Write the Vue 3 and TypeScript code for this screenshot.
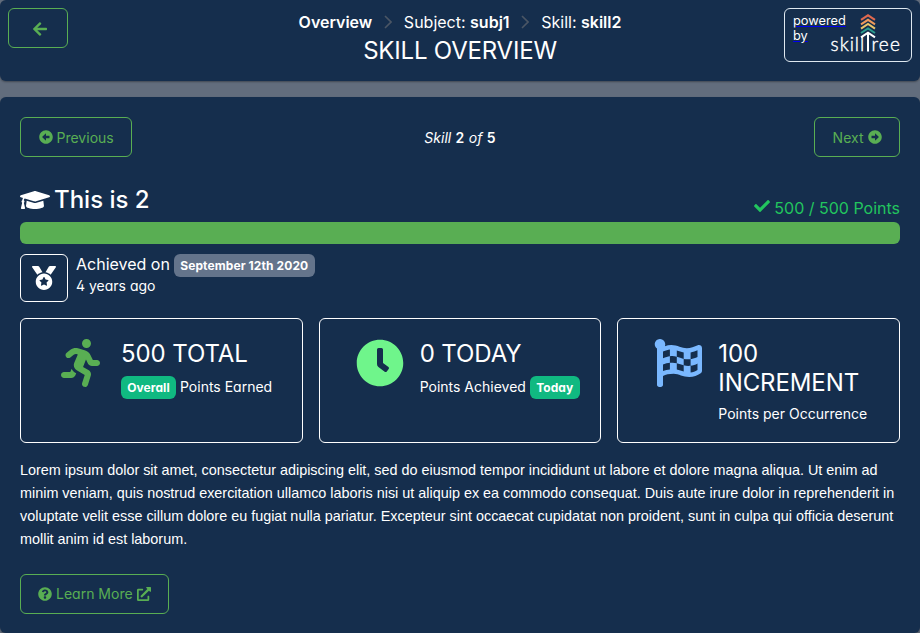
<script setup lang="ts">
import { h, type FunctionalComponent } from 'vue'

interface Glyph { w: number; d: string }

const glyphs: Record<string, Glyph> = {
  arrowLeft: { w: 448, d: 'M257.5 445.1l-22.2 22.2c-9.4 9.4-24.6 9.4-33.9 0L7 273c-9.4-9.4-9.4-24.6 0-33.9L201.4 44.7c9.4-9.4 24.6-9.4 33.9 0l22.2 22.2c9.5 9.5 9.3 25-.4 34.3L136.6 216H424c13.3 0 24 10.7 24 24v32c0 13.3-10.7 24-24 24H136.6l120.5 114.8c9.8 9.3 10 24.8.4 34.3z' },
  circleLeft: { w: 512, d: 'M256 504C119 504 8 393 8 256S119 8 256 8s248 111 248 248-111 248-248 248zm116-292H256v-70.9c0-10.7-13-16.1-20.5-8.5L121.2 247.5c-4.7 4.7-4.7 12.2 0 16.9l114.3 114.9c7.6 7.6 20.5 2.2 20.5-8.5V300h116c6.6 0 12-5.4 12-12v-64c0-6.6-5.4-12-12-12z' },
  circleRight: { w: 512, d: 'M256 8c137 0 248 111 248 248S393 504 256 504 8 393 8 256 119 8 256 8zM140 300h116v70.9c0 10.7 13 16.1 20.5 8.5l114.3-114.9c4.7-4.7 4.7-12.2 0-16.9l-114.3-115c-7.6-7.6-20.5-2.2-20.5 8.5V212H140c-6.6 0-12 5.4-12 12v64c0 6.6 5.4 12 12 12z' },
  cap: { w: 640, d: 'M622.34 153.2L343.4 67.5c-15.2-4.67-31.6-4.67-46.79 0L17.66 153.2c-23.54 7.23-23.54 38.36 0 45.59l48.63 14.94c-10.67 13.19-17.23 29.28-17.88 46.9C38.78 266.15 32 276.11 32 288c0 10.78 5.68 19.85 13.86 25.65L20.33 428.53C18.11 438.52 25.71 448 35.94 448h56.11c10.24 0 17.84-9.48 15.62-19.47L82.14 313.65C90.32 307.85 96 298.78 96 288c0-11.57-6.47-21.25-15.66-26.87.76-15.02 8.44-28.3 20.69-36.72L296.6 284.5c9.06 2.78 26.44 6.25 46.79 0l278.95-85.7c23.55-7.24 23.55-38.36 0-45.6zM352.79 315.09c-28.53 8.76-52.84 3.92-65.59 0l-145.02-44.55L128 384c0 35.35 85.96 64 192 64s192-28.65 192-64l-14.18-113.47-145.03 44.56z' },
  check: { w: 512, d: 'M173.898 439.404l-166.4-166.4c-9.997-9.997-9.997-26.206 0-36.204l36.203-36.204c9.997-9.998 26.207-9.998 36.204 0L192 312.69 432.095 72.596c9.997-9.997 26.207-9.997 36.204 0l36.203 36.204c9.997 9.997 9.997 26.206 0 36.204l-294.4 294.401c-9.998 9.997-26.207 9.997-36.204-.001z' },
  medal: { w: 512, d: 'M223.75 130.75L154.62 15.54A31.997 31.997 0 0 0 127.18 0H16.03C3.08 0-4.5 14.57 2.92 25.18l111.27 158.96c29.72-27.77 67.52-46.83 109.56-53.39zM495.97 0H384.82c-11.24 0-21.66 5.9-27.44 15.54l-69.13 115.21c42.04 6.56 79.84 25.62 109.56 53.38L509.08 25.18C516.5 14.57 508.92 0 495.97 0zM256 160c-97.2 0-176 78.8-176 176s78.8 176 176 176 176-78.8 176-176-78.8-176-176-176zm92.52 157.26l-37.93 36.96 8.97 52.22c1.6 9.36-8.26 16.51-16.65 12.09L256 393.88l-46.9 24.65c-8.4 4.45-18.25-2.74-16.65-12.09l8.97-52.22-37.93-36.96c-6.82-6.64-3.05-18.23 6.35-19.59l52.43-7.64 23.43-47.52c2.11-4.28 6.19-6.39 10.28-6.39 4.11 0 8.22 2.14 10.33 6.39l23.43 47.52 52.43 7.64c9.4 1.36 13.17 12.95 6.35 19.59z' },
  running: { w: 416, d: 'M272 96c26.51 0 48-21.49 48-48S298.51 0 272 0s-48 21.49-48 48 21.49 48 48 48zM113.69 317.47l-14.8 34.52H32c-17.67 0-32 14.33-32 32s14.33 32 32 32h77.45c19.25 0 36.58-11.44 44.11-29.09l8.79-20.52-10.67-6.3c-17.32-10.23-30.06-25.37-37.99-42.61zM384 223.99h-44.03l-26.06-53.25c-12.5-25.55-35.45-44.23-61.78-50.94l-71.08-21.14c-28.3-6.8-57.77-.55-80.84 17.14l-39.67 30.41c-14.03 10.75-16.69 30.83-5.94 44.86s30.84 16.69 44.86 5.94l39.66-30.41c7.67-5.89 17.44-8 25.27-6.14l14.7 4.37-37.46 87.39c-12.62 29.48-1.31 64.01 26.3 80.31l84.98 50.17-27.47 87.73c-5.28 16.86 4.11 34.82 20.97 40.1 3.19 1 6.41 1.48 9.58 1.48 13.61 0 26.23-8.77 30.52-22.45l31.64-101.06c5.91-20.77-2.89-43.08-21.64-54.39l-61.24-36.14 31.31-78.28 20.27 41.43c8 16.34 24.92 26.89 43.11 26.89H384c17.67 0 32-14.33 32-32s-14.33-31.99-32-31.99z' },
  clock: { w: 512, d: 'M256,8C119,8,8,119,8,256S119,504,256,504,504,393,504,256,393,8,256,8Zm92.49,313h0l-20,25a16,16,0,0,1-22.49,2.5h0l-67-49.72a40,40,0,0,1-15-31.23V112a16,16,0,0,1,16-16h32a16,16,0,0,1,16,16V256l58,42.5A16,16,0,0,1,348.49,321Z' },
  flag: { w: 512, d: 'M243.2 189.9V258c26.1 5.9 49.3 15.6 73.6 22.3v-68.2c-26-5.8-49.4-15.5-73.6-22.2zm223.3-123c-34.3 15.9-76.5 31.9-117 31.9C296 98.8 251.7 64 184.3 64c-25 0-47.3 4.4-68 12 2.8-7.3 4.1-15.2 3.6-23.6C118.1 24 94.8 1.2 66.3 0 34.3-1.3 8 24.3 8 56c0 19 9.5 35.8 24 45.9V488c0 13.3 10.7 24 24 24h16c13.3 0 24-10.7 24-24v-94.4c28.3-12.1 63.6-22.1 114.4-22.1 53.6 0 97.8 34.8 165.2 34.8 48.2 0 86.7-16.3 122.5-40.9 8.7-6 13.8-15.8 13.8-26.4V95.9c.1-23.3-24.2-38.8-45.4-29zM169.6 325.5c-25.8 2.7-50 8.2-73.6 16.6v-70.5c26.2-9.3 47.5-15 73.6-17.4v71.3zM464 191c-23.6 9.8-46.3 19.5-73.6 23.9V286c24.8-3.4 51.4-11.8 73.6-26v70.5c-25.1 16.1-48.5 24.7-73.6 27.1V286c-27 3.7-47.9 1.5-73.6-5.6v67.4c-23.9-7.4-47.3-16.7-73.6-21.3V258c-19.7-4.4-40.8-6.8-73.6-3.8v-70c-22.4 3.1-44.6 10.2-73.6 20.9v-70.5c33.2-12.2 50.1-19.8 73.6-22v71.6c27-3.7 48.4-1.3 73.6 5.7v-67.4c23.7 7.4 47.2 16.7 73.6 21.3v68.4c23.7 5.3 47.6 6.9 73.6 2.7V143c27-4.8 52.3-13.6 73.6-22.5z' },
  question: { w: 512, d: 'M504 256c0 136.997-111.043 248-248 248S8 392.997 8 256C8 119.083 119.043 8 256 8s248 111.083 248 248zM262.655 90c-54.497 0-89.255 22.957-116.549 63.758-3.536 5.286-2.353 12.415 2.715 16.258l34.699 26.31c5.205 3.947 12.621 3.008 16.665-2.122 17.864-22.658 30.113-35.797 57.303-35.797 20.429 0 45.698 13.148 45.698 32.958 0 14.976-12.363 22.667-32.534 33.976C247.128 238.528 216 254.941 216 296v4c0 6.627 5.373 12 12 12h56c6.627 0 12-5.373 12-12v-1.333c0-28.462 83.186-29.647 83.186-106.667 0-58.002-60.165-102-116.531-102zM256 338c-25.365 0-46 20.635-46 46 0 25.364 20.635 46 46 46s46-20.636 46-46c0-25.365-20.635-46-46-46z' },
  external: { w: 512, d: 'M432,320H400a16,16,0,0,0-16,16V448H64V128H208a16,16,0,0,0,16-16V80a16,16,0,0,0-16-16H48A48,48,0,0,0,0,112V464a48,48,0,0,0,48,48H400a48,48,0,0,0,48-48V336A16,16,0,0,0,432,320ZM488,0h-128c-21.37,0-32.05,25.91-17,41l35.73,35.73L135,320.37a24,24,0,0,0,0,34L157.67,377a24,24,0,0,0,34,0L435.28,133.32,471,169c15,15,41,4.5,41-17V24A24,24,0,0,0,488,0Z' },
}

const Icon: FunctionalComponent<{ name: string }> = (props) => {
  const g = glyphs[props.name]
  return h('svg', { viewBox: `0 0 ${g.w} 512`, fill: 'currentColor', 'aria-hidden': 'true' }, [h('path', { d: g.d })])
}
Icon.props = ['name']

const chevrons = [
  { y: 10.9, color: '#e0694f' },
  { y: 15.4, color: '#ee9a5c' },
  { y: 19.6, color: '#e8c56a' },
  { y: 24, color: '#2a9d8f' },
]

interface Stat { icon: string; tone: string; title: string; before?: string; text: string; after?: string }
const stats: Stat[] = [
  { icon: 'running', tone: 'green', title: '500 TOTAL', before: 'Overall', text: 'Points Earned' },
  { icon: 'clock', tone: 'mint', title: '0 TODAY', text: 'Points Achieved', after: 'Today' },
  { icon: 'flag', tone: 'blue', title: '100 INCREMENT', text: 'Points per Occurrence' },
]
</script>

<template>
  <div class="page">
    <header class="panel top">
      <button class="btn back" aria-label="Back"><Icon name="arrowLeft" class="i16" /></button>
      <div class="titles">
        <nav class="crumbs">
          <b>Overview</b>
          <svg class="sep" viewBox="0 0 8 14"><path d="M1 1l6 6-6 6" /></svg>
          <span>Subject: <b>subj1</b></span>
          <svg class="sep" viewBox="0 0 8 14"><path d="M1 1l6 6-6 6" /></svg>
          <span>Skill: <b>skill2</b></span>
        </nav>
        <h1>SKILL OVERVIEW</h1>
      </div>
      <a class="powered" href="#">
        <span class="by">powered</span>
        <span class="by">by</span>
        <svg class="logo" viewBox="0 0 72 46" aria-label="skilltree">
          <path v-for="c in chevrons" :key="c.y" class="chev" :d="`M31 ${c.y}l7-4.6 7 4.6`" :stroke="c.color" />
          <path class="trunk" d="M31 28.4l7-4.7 7 4.7M38 24v18.6" />
          <text class="word" x="0.6" y="42.4" textLength="33.6">skill</text>
          <text class="word" x="41.4" y="42.4" textLength="28.6">ree</text>
        </svg>
      </a>
    </header>

    <main class="panel body">
      <div class="pager">
        <button class="btn"><Icon name="circleLeft" class="i14" /><span>Previous</span></button>
        <span class="count"><i>Skill</i> <b>2</b> <i>of</i> <b>5</b></span>
        <button class="btn"><span>Next</span><Icon name="circleRight" class="i14" /></button>
      </div>

      <div class="skill">
        <h2><Icon name="cap" class="i24" />This is 2</h2>
        <div class="points"><Icon name="check" class="i16" />500 / 500 Points</div>
      </div>
      <div class="bar"></div>

      <div class="achieved">
        <div class="medal"><Icon name="medal" class="i24" /></div>
        <div>
          <div class="when"><span class="on">Achieved on</span><span class="tag gray">September 12th 2020</span></div>
          <div class="ago">4 years ago</div>
        </div>
      </div>

      <div class="stats">
        <section v-for="s in stats" :key="s.title" class="stat">
          <div class="pic" :class="s.tone"><Icon :name="s.icon" class="i48" /></div>
          <div class="info">
            <h3>{{ s.title }}</h3>
            <div class="line">
              <span v-if="s.before" class="tag">{{ s.before }}</span>
              <span class="label">{{ s.text }}</span>
              <span v-if="s.after" class="tag">{{ s.after }}</span>
            </div>
          </div>
        </section>
      </div>

      <p class="desc">Lorem ipsum dolor sit amet, consectetur adipiscing elit, sed do eiusmod tempor incididunt ut labore et dolore magna aliqua. Ut enim ad minim veniam, quis nostrud exercitation ullamco laboris nisi ut aliquip ex ea commodo consequat. Duis aute irure dolor in reprehenderit in voluptate velit esse cillum dolore eu fugiat nulla pariatur. Excepteur sint occaecat cupidatat non proident, sunt in culpa qui officia deserunt mollit anim id est laborum.</p>

      <button class="btn learn"><Icon name="question" class="i14" /><span>Learn More</span><Icon name="external" class="i14" /></button>
    </main>
  </div>
</template>

<style>
body { background: #626d7d; }
</style>

<style scoped>
* { box-sizing: border-box; }
.page {
  width: 920px; height: 633px; overflow: hidden;
  display: flex; flex-direction: column; gap: 16px;
  font: 400 16px/21px Inter, sans-serif;
  font-feature-settings: "cv02", "cv03", "cv04", "cv11";
  color: #fff; background: #626d7d;
}
svg { display: block; flex: none; }
.panel { background: #152e4d; border-radius: 6px; box-shadow: 0 1px 2px rgba(0, 0, 0, .35); }
.i14 { height: 14px; }
.i16 { height: 16px; }
.i24 { height: 24px; }
.i48 { height: 48px; }
h1, h2, h3, p { margin: 0; font-weight: 400; }
b { font-weight: 600; }

.top { height: 81px; padding: 8px; display: grid; grid-template-columns: 128px 1fr 128px; align-items: start; }
.btn {
  height: 40px; padding: 0 17.5px; display: flex; align-items: center; gap: 4px;
  font: 400 14px/17px Inter, sans-serif; font-feature-settings: inherit;
  color: #59ae53; background: transparent; border: 1px solid #59ae53; border-radius: 6px;
}
.back { width: 60px; padding: 1px 0 0 24.4px; }
.titles { text-align: center; padding-top: 4px; }
.crumbs { display: flex; justify-content: center; align-items: center; height: 20px; }
.sep { width: 8px; height: 14px; margin: 0 11.8px; fill: none; stroke: #4b5665; stroke-width: 1.6; }
h1 { font-size: 24px; line-height: 29px; margin-top: 4px; letter-spacing: -.2px; }
.powered { width: 128px; height: 54px; border: 1px solid #dfe9f0; border-radius: 6px; padding: 4px 8px 0; color: #0000ee; position: relative; text-decoration: none; }
.by { display: block; width: fit-content; font-size: 12.8px; line-height: 15px; color: #fff; text-decoration: underline; text-decoration-color: #0000ee; }
.logo { position: absolute; left: 45px; top: 0; width: 72px; height: 46px; }
.chev { fill: none; stroke-width: 2; }
.trunk { fill: none; stroke: #fff; stroke-width: 2; }
.word { font: 300 19px Lato, sans-serif; fill: #fff; stroke: #fff; stroke-width: .4px; }

.body { height: 536px; padding: 20px; }
.pager { display: grid; grid-template-columns: 1fr auto 1fr; align-items: center; }
.pager .btn { justify-self: start; }
.pager .btn:last-child { justify-self: end; }
.count { font-size: 14px; word-spacing: .5px; }
.skill { display: flex; justify-content: space-between; align-items: flex-end; height: 62px; margin-bottom: 3px; }
h2 { display: flex; align-items: center; gap: 4px; font-size: 24px; line-height: 29px; font-weight: 500; padding-bottom: 5px; }
.points { display: flex; gap: 4px; color: #22c55e; line-height: 21px; }
.bar { height: 22px; border-radius: 6px; background: #59ae53; }
.achieved { display: flex; gap: 8px; margin-top: 10px; }
.medal { width: 48px; height: 48px; border: 1px solid #fff; border-radius: 6px; display: grid; place-items: center; }
.when { display: flex; align-items: center; gap: 4px; height: 22px; }
.on { padding-bottom: 2px; }
.ago { font-size: 14px; line-height: 20px; }
.tag { display: inline-block; height: 23px; padding: 0 6.3px; border-radius: 6px; background: #10b981; font-size: 12px; line-height: 23px; font-weight: 700; letter-spacing: .05px; }
.gray { background: #64748b; letter-spacing: .1px; }
.stats { display: grid; grid-template-columns: repeat(3, 1fr); gap: 16px; margin-top: 16px; }
.stat { height: 125px; border: 1px solid #fff; border-radius: 6px; padding: 20px 20px; display: flex; }
.pic { width: 80px; display: flex; justify-content: center; }
.green { color: #59ae53; }
.green svg { margin-right: 1px; }
.mint { color: #6ff58b; }
.blue { color: #7ab8ff; }
.info { flex: 1; }
h3 { font-size: 24px; line-height: 29px; letter-spacing: -.1px; }
.line { display: flex; align-items: center; gap: 4px; margin-top: 8px; font-size: 14px; line-height: 17px; white-space: nowrap; }
.label { padding-bottom: 2px; }
.desc { margin-top: 16px; font: 400 14.4px/23px "Liberation Sans", Arial, sans-serif; }
.learn { margin-top: 23px; padding: 0 17px; }
.learn span { padding-bottom: 2px; }
</style>
